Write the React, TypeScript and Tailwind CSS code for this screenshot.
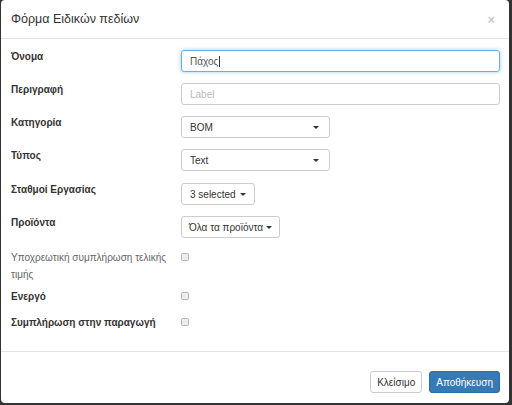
const font = { fontFamily: '"Liberation Sans", Arial, sans-serif' }

function Caret() {
  return <span className="inline-block w-0 h-0 border-l-[3px] border-r-[3px] border-t-[3px] border-l-transparent border-r-transparent border-t-[#333]" />
}

function Label({ children }: { children: React.ReactNode }) {
  return <div className="w-[170px] shrink-0 text-[10px] leading-[13px] font-bold text-[#333]">{children}</div>
}

function Checkbox() {
  return <span className="block w-[8px] h-[8px] rounded-[1.5px] border border-[#b5b5b5] bg-[#ececec]" />
}

export default function App() {
  return (
    <div className="w-[512px] h-[405px] bg-[#333] pl-[1px]" style={font}>
      <div className="w-[508px] h-[403px] bg-white rounded-[4px] flex flex-col">
        <div className="h-[39px] shrink-0 border-b border-[#e5e5e5] flex items-center justify-between pl-[10px] pr-[14px]">
          <span className="text-[12.5px] text-[#333]">Φόρμα Ειδικών πεδίων</span>
          <span className="text-[13px] font-bold text-[#c9c9c9] leading-none">×</span>
        </div>

        <div className="flex-1 pt-[11px] pl-[10px] pr-[9px]">
          <div className="flex mb-[11px]">
            <Label>Όνομα</Label>
            <div className="flex-1 h-[22px] rounded-[3px] border border-[#66afe9] shadow-[0_0_4px_rgba(102,175,233,0.6)] flex items-center px-[8px] text-[10px] text-[#555]">
              Πάχος<span className="w-px h-[11px] bg-[#333] ml-px" />
            </div>
          </div>
          <div className="flex mb-[11px]">
            <Label>Περιγραφή</Label>
            <div className="flex-1 h-[22px] rounded-[3px] border border-[#ccc] flex items-center px-[8px] text-[10px] text-[#bbb]">
              Label
            </div>
          </div>
          <div className="flex mb-[11px]">
            <Label>Κατηγορία</Label>
            <div className="w-[149px] h-[22px] rounded-[3px] border border-[#ccc] flex items-center justify-between pl-[8px] pr-[10px] text-[10px] text-[#333]">
              BOM <Caret />
            </div>
          </div>
          <div className="flex mb-[12px]">
            <Label>Τύπος</Label>
            <div className="w-[149px] h-[22px] rounded-[3px] border border-[#ccc] flex items-center justify-between pl-[8px] pr-[10px] text-[10px] text-[#333]">
              Text <Caret />
            </div>
          </div>
          <div className="flex mb-[11px]">
            <Label>Σταθμοί Εργασίας</Label>
            <div className="h-[22px] rounded-[3px] border border-[#ccc] flex items-center gap-[4px] px-[8px] text-[10px] text-[#333]">
              3 selected <Caret />
            </div>
          </div>
          <div className="flex mb-[11px]">
            <Label>Προϊόντα</Label>
            <div className="h-[22px] rounded-[3px] border border-[#ccc] flex items-center gap-[3px] px-[7px] text-[10px] text-[#333]">
              Όλα τα προϊόντα <Caret />
            </div>
          </div>
          <div className="flex mb-[5px]">
            <div className="w-[170px] shrink-0 pr-[4px] text-[10px] leading-[17px] text-[#666]">
              Υποχρεωτική συμπλήρωση τελικής τιμής
            </div>
            <div className="pt-[4px]"><Checkbox /></div>
          </div>
          <div className="flex mb-[9px]">
            <div className="w-[170px] shrink-0 text-[10px] leading-[17px] font-bold text-[#333]">Ενεργό</div>
            <div className="pt-[4px]"><Checkbox /></div>
          </div>
          <div className="flex">
            <div className="w-[170px] shrink-0 text-[10px] leading-[17px] font-bold text-[#333]">Συμπλήρωση στην παραγωγή</div>
            <div className="pt-[4px]"><Checkbox /></div>
          </div>
        </div>

        <div className="h-[52px] shrink-0 border-t border-[#e5e5e5] flex items-start justify-end gap-[7px] pt-[19px] pr-[9px]">
          <div className="h-[22px] px-[6px] rounded-[3px] border border-[#ccc] flex items-center text-[10px] text-[#333]">Κλείσιμο</div>
          <div className="h-[22px] px-[6px] rounded-[3px] border border-[#2e6da4] bg-[#337ab7] flex items-center text-[10px] text-white">Αποθήκευση</div>
        </div>
      </div>
    </div>
  )
}
